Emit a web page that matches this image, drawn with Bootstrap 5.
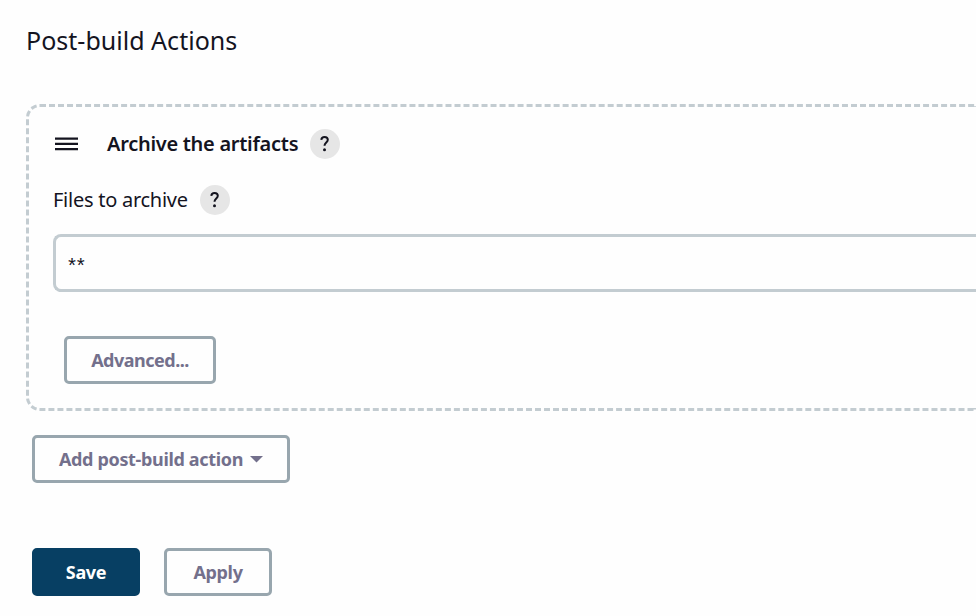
<!DOCTYPE html>
<html lang="en">
<head>
<meta charset="utf-8">
<meta name="viewport" content="width=device-width, initial-scale=1">
<title>Post-build Actions</title>
<link href="https://cdn.jsdelivr.net/npm/bootstrap@5.3.0/dist/css/bootstrap.min.css" rel="stylesheet">
<style>
body{font-family:"Noto Sans","Open Sans",sans-serif;font-size:20px;line-height:30px;color:#14141f;background:#fefefe;height:616px}
.page{padding:23px 0 0 26px}
.page-title{font-size:25px;line-height:34px;font-weight:400;letter-spacing:.02px;margin-bottom:47px}
.step{height:307px;border:3px dashed #c3ccd1;border-right:0;border-radius:14px 0 0 14px;padding:22px 0 0 24px}
.step-title{font-size:20px;font-weight:600;letter-spacing:-.28px;line-height:30px;margin:0 12px 0 29px}
.grip{width:23px;height:14px;margin:0 0 1px 2px}
.label-row{margin-top:26px}
.field-label{letter-spacing:-.26px;margin-right:12px}
.help{width:30px;height:30px;border-radius:50%;background:#e6e6e6}
.field{height:58px;margin-top:19px;border:3px solid #c3ccd1;border-right:0;border-radius:8px 0 0 8px;font-family:"Liberation Mono",monospace;font-size:20px;letter-spacing:-3.2px;padding:8px 0 0 10px;color:#14141f;background:#fefefe}
.btn-act{height:48px;border:3px solid #98a6ae;border-radius:5px;color:#73708c;font-size:18px;font-weight:700;letter-spacing:-.34px;line-height:26px;padding:0;background:#fefefe}
.btn-advanced{width:152px;letter-spacing:-.5px;margin:44px 0 0 11px}
.btn-add{width:258px;margin:24px 0 0 6px}
.btn-pair{width:108px}
.btn-save{background:#073f63;border-color:#073f63;color:#fff}
.footer-row{margin:65px 0 0 6px;gap:24px}
.caret{margin-left:7px}
</style>
<script src="https://cdn.jsdelivr.net/npm/bootstrap@5.3.0/dist/js/bootstrap.bundle.min.js"></script>
</head>
<body class="overflow-hidden">
<main class="page">
  <h1 class="page-title">Post-build Actions</h1>
  <section class="step">
    <div class="d-flex align-items-center">
      <svg class="grip" viewBox="0 0 23 14" fill="#14141f" aria-hidden="true"><path d="M0 .6h23v2.1H0zM0 5.8h23v2.1H0zM0 11.1h23v2.1H0z"/></svg>
      <h2 class="step-title">Archive the artifacts</h2>
      <a class="help d-flex align-items-center justify-content-center text-decoration-none" href="#" aria-label="Help">
        <svg width="30" height="30" viewBox="0 0 30 30" fill="none" stroke="#14141f" stroke-width="2" aria-hidden="true"><path d="M11.3 10.8C11.5 8.9 12.7 8 14.5 8c2 0 3.3 1.1 3.3 2.8 0 2.6-3.3 2.9-3.3 6"/><circle cx="14.5" cy="20.8" r="1.5" fill="#14141f" stroke="none"/></svg>
      </a>
    </div>
    <div class="d-flex align-items-center label-row">
      <label class="field-label" for="files">Files to archive</label>
      <a class="help d-flex align-items-center justify-content-center text-decoration-none" href="#" aria-label="Help">
        <svg width="30" height="30" viewBox="0 0 30 30" fill="none" stroke="#14141f" stroke-width="2" aria-hidden="true"><path d="M11.3 10.8C11.5 8.9 12.7 8 14.5 8c2 0 3.3 1.1 3.3 2.8 0 2.6-3.3 2.9-3.3 6"/><circle cx="14.5" cy="20.8" r="1.5" fill="#14141f" stroke="none"/></svg>
      </a>
    </div>
    <input id="files" class="field form-control" type="text" value="**">
    <button class="btn btn-act btn-advanced d-block" type="button">Advanced...</button>
  </section>
  <button class="btn btn-act btn-add d-flex align-items-center justify-content-center" type="button">
    <span>Add post-build action</span>
    <svg class="caret" width="13" height="7" viewBox="0 0 13 7" fill="#73708c" aria-hidden="true"><path d="M0 0h13L6.5 6.5z"/></svg>
  </button>
  <div class="footer-row d-flex">
    <button class="btn btn-act btn-pair btn-save" type="button">Save</button>
    <button class="btn btn-act btn-pair" type="button">Apply</button>
  </div>
</main>
</body>
</html>
